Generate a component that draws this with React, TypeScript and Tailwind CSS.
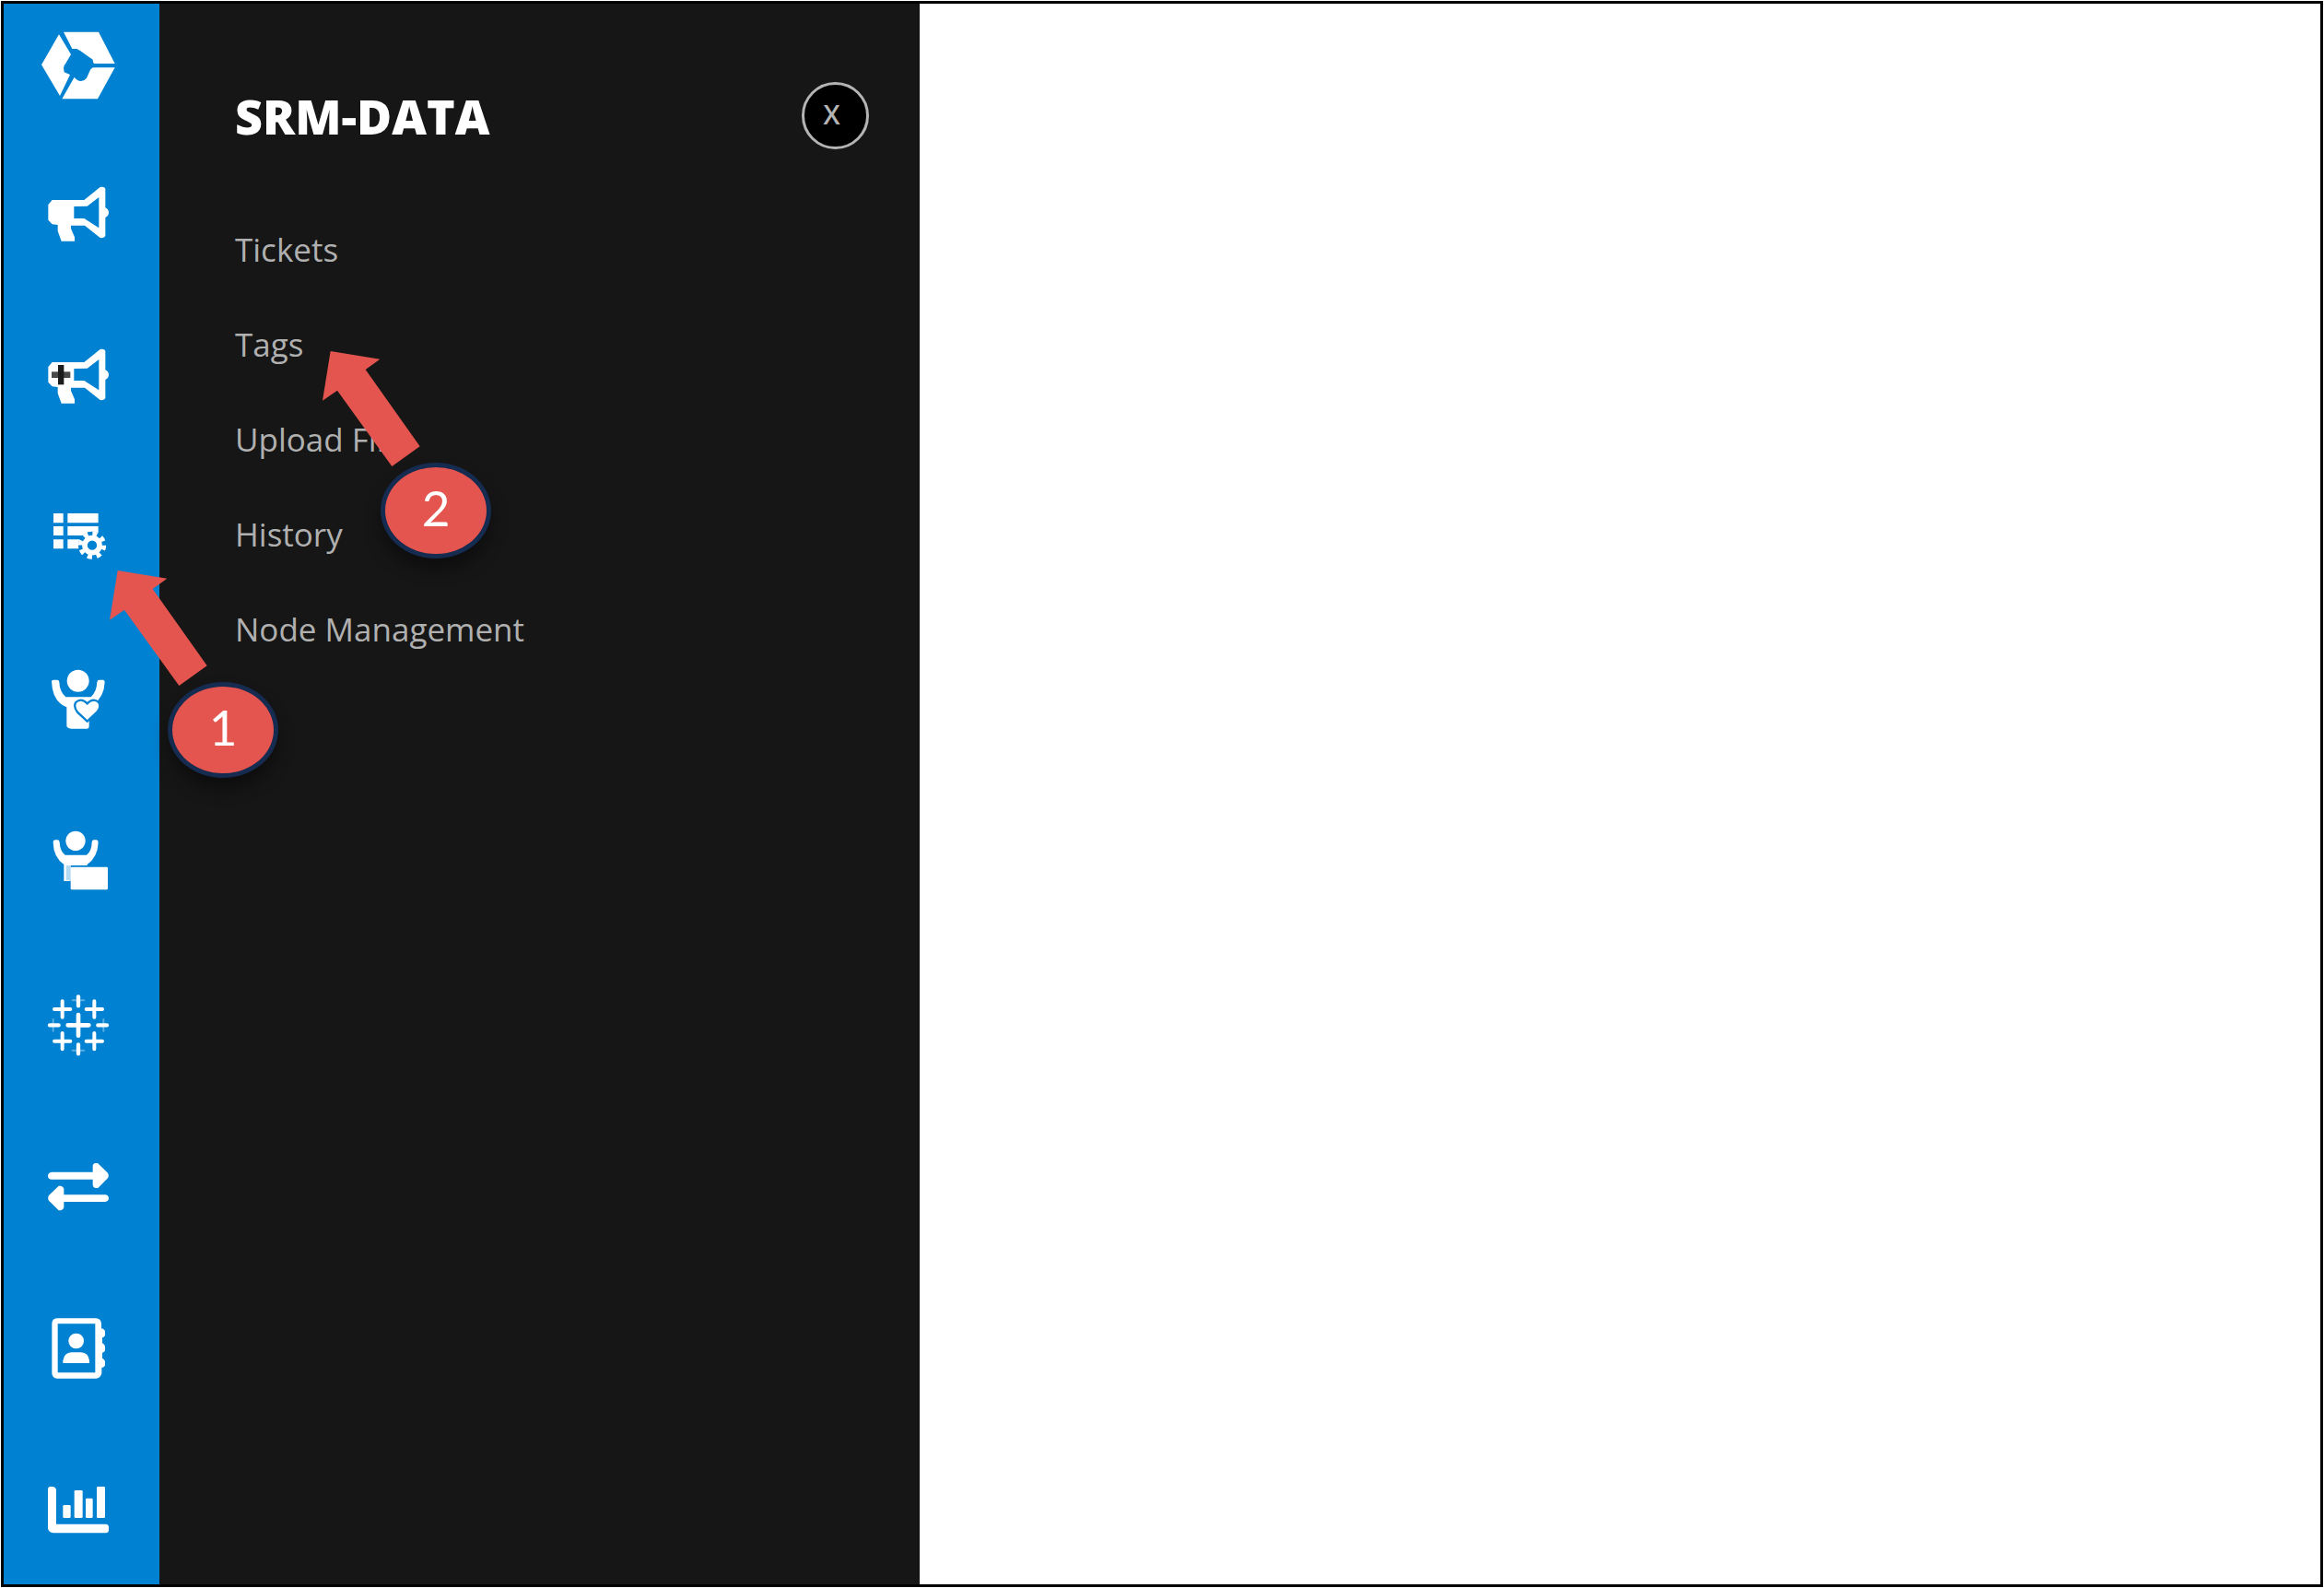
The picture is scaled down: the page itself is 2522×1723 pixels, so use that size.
import type { ReactNode } from "react";

const BLUE = "#0081d1";

const megaphone = (
  <path
    fillRule="evenodd"
    d="M170 651H274L326 609Q342 606 343 616V676Q354 682 354 692Q354 702 343 708V768Q340 776 326 774L276 734H231V744L243 772V785H200L188 752V732L170 730L157 716V666ZM241 672V711H274L322 742V642L284 671Z"
  />
);

type NavIcon = { label: string; viewBox: string; drawing: ReactNode };

const navIcons: NavIcon[] = [
  { label: "Campaigns", viewBox: "156 594 198 198", drawing: megaphone },
  {
    label: "New campaign",
    viewBox: "156 594 198 198",
    drawing: (
      <>
        {megaphone}
        <path fill="#4a4a4a" d="M168 682H229V702H168Z" />
        <path fill="#1c1c1c" d="M189 660H208V724H189Z" />
      </>
    ),
  },
  {
    label: "SRM data",
    viewBox: "156 600 198 198",
    drawing: (
      <>
        <path d="M174 621H206V652H174ZM220 621H320V652H220ZM174 663H206V693H174ZM220 663H320V693H220ZM174 706H206V736H174ZM220 706H270V736H220Z" />
        <circle cx="300" cy="725" r="45" fill={BLUE} />
        <circle cx="300" cy="725" r="24" fill="none" stroke="#fff" strokeWidth="17" />
        <circle cx="300" cy="725" r="38" fill="none" stroke="#fff" strokeWidth="15" strokeDasharray="15 14.84" />
      </>
    ),
  },
  {
    label: "Customer care",
    viewBox: "156 78 198 198",
    drawing: (
      <>
        <circle cx="254" cy="116" r="36" />
        <path d="M168 118Q168 113 174 113H186Q192 113 193 120Q194 152 214 169H296Q315 151 316 120Q317 113 323 113H336Q341 114 341 120Q339 170 303 193L290 202V264Q290 272 282 272H232Q217 271 217 262V202Q170 184 168 118Z" />
        <path
          fill="#fff"
          stroke={BLUE}
          strokeWidth="7"
          d="M284 248L252 218Q238 200 247 186Q264 170 284 190Q304 170 321 186Q331 202 316 218Z"
        />
      </>
    ),
  },
  {
    label: "Agent desk",
    viewBox: "156 606 198 198",
    drawing: (
      <>
        <circle cx="246" cy="637" r="32" />
        <path d="M173 642Q173 634 180 634H187Q193 634 194 641Q195 670 212 683H282Q299 669 299 641Q300 634 306 634H314Q320 635 320 642Q318 690 284 714V717H229V768H208V714Q174 690 173 642Z" />
        <path fill="#b5dbf3" d="M215 717H231V766H215Z" />
        <rect x="230" y="722" width="121" height="74" rx="4" />
      </>
    ),
  },
  {
    label: "Analytics",
    viewBox: "156 84 198 198",
    drawing: (
      <g fill="none" stroke="#fff" strokeLinecap="round">
        <path strokeWidth="14" d="M221 187H289M255 153V221" />
        <path
          strokeWidth="12"
          d="M177 135H229M203 109V161M281 135H333M307 109V161M177 239H229M203 213V265M281 239H333M307 213V265"
        />
        <path strokeWidth="13" d="M255 94V124M255 250V280M162 187H191M319 187H348" />
        <path strokeWidth="6" opacity="0.35" d="M236 106H274M236 269H274M173 168V206M337 168V206" />
      </g>
    ),
  },
  {
    label: "Transfers",
    viewBox: "156 612 198 198",
    drawing: (
      <path d="M168 665H302V645Q303 636 312 636H318L351 668Q356 677 351 685L319 717H312Q303 716 302 707V689H168Q156 688 156 677Q157 666 168 665ZM342 739H208V719Q206 711 197 710H191L159 741Q154 750 159 758L191 790H198Q206 789 208 780V762H342Q354 761 354 750Q353 740 342 739Z" />
    ),
  },
  {
    label: "Contacts",
    viewBox: "156 90 198 198",
    drawing: (
      <>
        <path
          fillRule="evenodd"
          d="M186 91H312Q328 92 330 108V124Q341 126 342 135V146Q341 153 333 154V172Q341 175 342 183V196Q341 202 333 203V221Q341 224 342 232V243Q341 250 331 252V270Q328 286 312 287H186Q170 286 169 270V108Q170 92 186 91ZM188 109V268H310V109Z"
        />
        <circle cx="248" cy="165" r="25" />
        <path d="M205 237V229Q209 203 232 202H264Q288 203 291 229V237Z" />
      </>
    ),
  },
  {
    label: "Reports",
    viewBox: "156 619 198 198",
    drawing: (
      <>
        <path d="M156 647Q157 640 164 640H172Q181 641 183 649V762H346Q353 763 354 770V784Q353 790 346 791H174Q158 790 156 776Z" />
        <rect x="205" y="700" width="25" height="42" rx="4" />
        <rect x="242" y="652" width="27" height="90" rx="4" />
        <rect x="279" y="678" width="23" height="64" rx="4" />
        <rect x="315" y="640" width="27" height="102" rx="4" />
      </>
    ),
  },
];

const menu = ["Tickets", "Tags", "Upload File", "History", "Node Management"];

function Logo() {
  return (
    <svg viewBox="135 102 240 222" className="h-[74px] w-[80px]" fill="#fff" aria-hidden="true">
      <path d="M207 104H321L374 207H306Q302 202 302 194L262 166L250 159H235Z" />
      <path d="M192 112L231 177L213 208Q206 215 207 221L209 235L228 243L195 312L135 211Z" />
      <path d="M374 220L318 322H202L242 251Q250 263 264 264Q276 262 282 254L292 232Q296 221 306 220Z" />
    </svg>
  );
}

function Callout({ step }: { step: string }) {
  return (
    <div className="flex flex-col">
      <svg viewBox="0 0 318 375" className="h-[125px] w-[106px]" fill="#e5554f" aria-hidden="true">
        <path d="M26 0L187 26L140 60L317 310L226 375L48 128L0 161Z" />
      </svg>
      <div className="-mt-1 ml-[63px] flex h-[104px] w-[120px] items-center justify-center rounded-[50%] border-5 border-[#162b50] bg-[#e5554f] pb-2 font-[Lato,sans-serif] text-[53px] leading-none text-white shadow-[0_12px_18px_rgba(0,0,0,0.4)]">
        {step}
      </div>
    </div>
  );
}

export default function App() {
  return (
    <div className="flex min-h-screen bg-white p-px">
      <div className="relative flex flex-1 border-3 border-black">
        <nav aria-label="Main" className="flex w-[169px] shrink-0 flex-col bg-[#0081d1] pt-[30px]">
          <a href="#home" aria-label="Home" className="ml-[41px] block w-[80px]">
            <Logo />
          </a>
          <div className="mt-[90px] ml-12 flex flex-col gap-[110px]">
            {navIcons.map((icon) => (
              <button key={icon.label} type="button" aria-label={icon.label} className="size-[66px]">
                <svg viewBox={icon.viewBox} className="size-full overflow-visible" fill="#fff" aria-hidden="true">
                  {icon.drawing}
                </svg>
              </button>
            ))}
          </div>
        </nav>

        <aside className="flex w-[825px] shrink-0 flex-col bg-[#161616] pt-[85px] pr-[55px] pl-[82px] font-['Open_Sans',sans-serif]">
          <header className="flex items-center justify-between">
            <h1 className="text-[52px] leading-none font-extrabold text-white">SRM-DATA</h1>
            <button
              type="button"
              aria-label="Close"
              className="flex size-[73px] items-center justify-center rounded-full border-3 border-[#b4b4b4] bg-black pr-2 pb-1 text-[29px] leading-none font-semibold text-[#b4b4b4]"
            >
              X
            </button>
          </header>
          <ul className="mt-[57px] flex flex-col">
            {menu.map((item) => (
              <li key={item} className="h-[103px]">
                <a href="#menu" className="text-[35px] leading-[103px] text-[#b0b0b0]">
                  {item}
                </a>
              </li>
            ))}
          </ul>
        </aside>

        <main className="flex-1 bg-white" />

        <div className="absolute top-[615px] left-[115px]">
          <Callout step="1" />
        </div>
        <div className="absolute top-[377px] left-[346px]">
          <Callout step="2" />
        </div>
      </div>
    </div>
  );
}
